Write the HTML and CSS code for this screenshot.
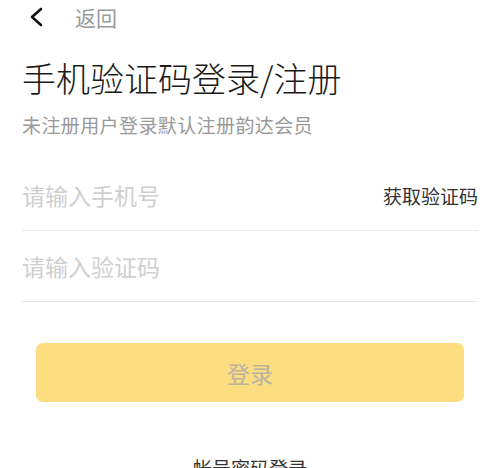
FILE: index.html
```html
<!DOCTYPE html>
<html lang="zh-CN">
<head>
  <meta charset="UTF-8">
  <meta name="viewport" content="width=device-width, initial-scale=1.0">
  <title>手机验证码登录</title>
  <link rel="stylesheet" href="styles.css">
</head>
<body>
  <div class="page">
    <div class="nav-bar">
      <svg class="back-icon" width="16" height="20" viewBox="0 0 16 20">
        <path d="M13 2 L4 10 L13 18" fill="none" stroke="#111" stroke-width="2.6" stroke-linecap="round" stroke-linejoin="round"/>
      </svg>
      <span class="back-text">返回</span>
    </div>

    <h1 class="title">手机验证码登录/注册</h1>
    <p class="subtitle">未注册用户登录默认注册韵达会员</p>

    <div class="form">
      <div class="form-row">
        <input type="tel" class="form-input" placeholder="请输入手机号">
        <span class="get-code">获取验证码</span>
      </div>
      <div class="form-row">
        <input type="text" class="form-input" placeholder="请输入验证码">
      </div>
    </div>

    <button class="login-btn" disabled>登录</button>

    <div class="switch-link">帐号密码登录</div>
  </div>
</body>
</html>
```

FILE: styles.css
```css
body {
  margin: 0;
  background: #fff;
  font-family: "Noto Sans CJK SC", "Noto Sans", sans-serif;
  color: #1a1a1a;
}
.page {
  padding: 0 22px;
}
.nav-bar {
  height: 34px;
  display: flex;
  align-items: center;
}
.back-icon {
  margin-left: 6px;
}
.back-text {
  margin-left: 31px;
  font-size: 21px;
  color: #9a9a9a;
}
.title {
  margin: 23px 0 0;
  font-size: 34px;
  line-height: 42px;
  font-weight: 300;
  color: #1a1a1a;
}
.subtitle {
  margin: 14px 0 0;
  font-size: 19px;
  letter-spacing: 0.4px;
  line-height: 24px;
  color: #999;
}
.form {
  margin-top: 23px;
}
.form-row {
  height: 70px;
  display: flex;
  align-items: center;
  border-bottom: 1px solid #e6e6e6;
}
.form-input {
  flex: 1;
  min-width: 0;
  border: none;
  outline: none;
  padding: 0;
  font-family: inherit;
  font-size: 23px;
  color: #333;
  background: transparent;
}
.form-input::placeholder {
  color: #cfcfcf;
}
.get-code {
  font-size: 19px;
  color: #333;
}
.login-btn {
  display: block;
  width: calc(100% - 28px);
  height: 59px;
  margin: 41px 14px 0;
  border: none;
  border-radius: 7px;
  background-color: #fcdd7f;
  color: #b9b39f;
  font-family: inherit;
  font-size: 23px;
}
.switch-link {
  margin-top: 52px;
  text-align: center;
  font-size: 19px;
  color: #333;
}
```
